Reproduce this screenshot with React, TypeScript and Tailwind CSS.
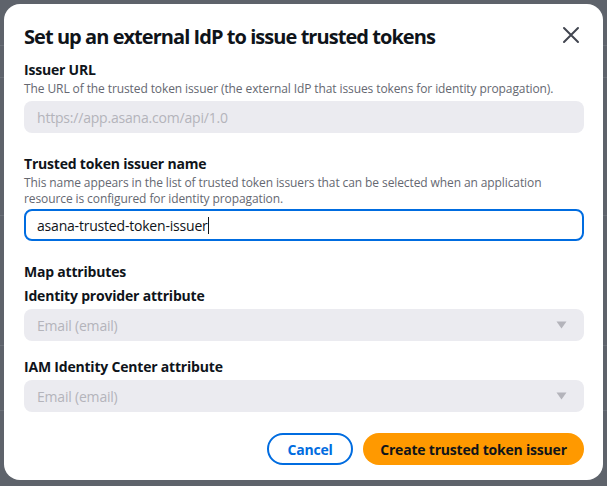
import React from "react";

const font = { fontFamily: '"Open Sans", "Noto Sans", Arial, sans-serif' };

function Caret() {
  return (
    <svg width="11" height="8" viewBox="0 0 11 8" className="shrink-0">
      <path d="M0.5 0.5 H10.5 L5.5 7.5 Z" fill="#b4b4bb" />
    </svg>
  );
}

function Label({ children }: { children: React.ReactNode }) {
  return <div className="text-[14px] leading-[22px] font-bold text-[#0f141a] tracking-[-0.2px]">{children}</div>;
}

function Desc({ children }: { children: React.ReactNode }) {
  return <div className="text-[12px] leading-[16px] text-[#656871] tracking-[-0.1px]">{children}</div>;
}

function DisabledSelect() {
  return (
    <div className="h-[32px] rounded-[8px] bg-[#ebebf0] flex items-center justify-between pl-[13px] pr-[17px]">
      <span className="text-[14px] text-[#b4b4bb] tracking-[-0.2px]">Email (email)</span>
      <Caret />
    </div>
  );
}

export default function App() {
  return (
    <div className="w-[607px] h-[486px] bg-[#5e636b] p-[4px] relative overflow-hidden" style={font}>
      <div className="absolute left-0 right-0 top-[45px] h-px bg-[#6b7078]" />
      <div className="absolute left-0 right-0 top-[77px] h-px bg-[#6b7078]" />
      <div className="absolute left-0 right-0 top-[215px] h-px bg-[#6b7078]" />
      <div className="absolute left-0 right-0 top-[345px] h-px bg-[#6b7078]" />
      <div className="absolute left-0 right-0 top-[410px] h-px bg-[#6b7078]" />
      <div className="relative w-[599px] h-[476px] bg-white rounded-[16px] pl-[20px] pr-[19px] pt-[21px] flex flex-col">
        <div className="flex items-start justify-between">
          <h1 className="text-[20px] leading-[24px] font-bold text-[#0f141a] tracking-[-0.95px]">
            Set up an external IdP to issue trusted tokens
          </h1>
          <svg width="18" height="18" viewBox="0 0 18 18" className="mt-[1px] mr-[4px]">
            <path d="M2 2 L16 16 M16 2 L2 16" stroke="#424650" strokeWidth="2" strokeLinecap="round" />
          </svg>
        </div>

        <div className="mt-[10px]">
          <Label>Issuer URL</Label>
          <Desc>The URL of the trusted token issuer (the external IdP that issues tokens for identity propagation).</Desc>
          <div className="mt-[4px] h-[32px] rounded-[8px] bg-[#ebebf0] flex items-center px-[13px]">
            <span className="text-[14px] text-[#b4b4bb] tracking-[-0.2px]">https://app.asana.com/api/1.0</span>
          </div>
        </div>

        <div className="mt-[20px]">
          <Label>Trusted token issuer name</Label>
          <Desc>
            This name appears in the list of trusted token issuers that can be selected when an application
            <br />
            resource is configured for identity propagation.
          </Desc>
          <div className="mt-[2px] h-[32px] rounded-[8px] border-2 border-[#006ce0] flex items-center px-[11px]">
            <span className="text-[14px] text-[#0f141a] tracking-[-0.2px]">asana-trusted-token-issuer</span>
            <span className="w-px h-[17px] bg-[#0f141a]" />
          </div>
        </div>

        <div className="mt-[20px]">
          <Label>Map attributes</Label>
        </div>
        <div className="mt-[2px]">
          <Label>Identity provider attribute</Label>
          <div className="mt-[2px]">
            <DisabledSelect />
          </div>
        </div>
        <div className="mt-[15px]">
          <Label>IAM Identity Center attribute</Label>
          <div className="mt-[2px]">
            <DisabledSelect />
          </div>
        </div>

        <div className="mt-[21px] flex justify-end gap-[10px]">
          <button className="h-[32px] w-[86px] rounded-full border-2 border-[#006ce0] text-[#006ce0] text-[14px] font-bold tracking-[-0.2px]">
            Cancel
          </button>
          <button className="h-[32px] w-[221px] rounded-full bg-[#ff9900] text-[#0f141a] text-[14px] font-bold tracking-[-0.2px]">
            Create trusted token issuer
          </button>
        </div>
      </div>
    </div>
  );
}
